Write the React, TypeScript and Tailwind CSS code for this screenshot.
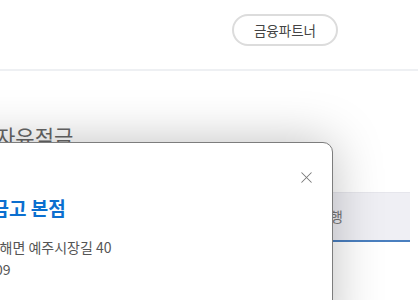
import { X } from 'lucide-react'

const font = { fontFamily: '"Noto Sans CJK KR", "Noto Sans", sans-serif' }

function Header() {
  return (
    <header className="flex h-[71px] items-center justify-end border-b-2 border-[#eef0f3] pr-[80px]">
      <button className="mt-[-9px] h-[32px] w-[106px] rounded-full border-2 border-[#dcdcdc] bg-white text-[13.5px] text-[#444]">
        금융파트너
      </button>
    </header>
  )
}

function BranchModal() {
  return (
    <div className="absolute left-[-110px] top-[142px] h-[200px] w-[443px] rounded-tr-[10px] border border-[#7d7d7d] bg-white pl-[25px] pt-[52px] shadow-[0_0_50px_rgba(0,0,0,0.25)]">
      <button className="absolute right-[16px] top-[25px] text-[#777]">
        <X size={19} strokeWidth={1.3} />
      </button>
      <h2 className="ml-[-12px] text-[19px] font-bold leading-[26px] text-[#0b6fcf]">영해새마을금고 본점</h2>
      <div className="mt-[15px] text-[14px] leading-[22px] text-[#555]">
        <p>경북 영덕군 영해면 예주시장길 40</p>
        <p className="ml-[7px]">054-732-3309</p>
      </div>
    </div>
  )
}

export default function App() {
  return (
    <div className="relative h-[300px] w-[418px] overflow-hidden bg-white" style={font}>
      <Header />
      <main className="pt-[50px]">
        <h1 className="ml-[-4px] text-[21px] leading-[30px] text-[#666]">자유적금</h1>
        <div className="mt-[41px] flex justify-end pr-[8px]">
          <div className="flex h-[50px] w-[200px] items-center justify-end border-t border-b-2 border-t-[#e6e6ec] border-b-[#4a7fbf] bg-[#efeff4] pr-[67px] text-[14px] text-[#777]">
            지점 은행
          </div>
        </div>
      </main>
      <BranchModal />
    </div>
  )
}
